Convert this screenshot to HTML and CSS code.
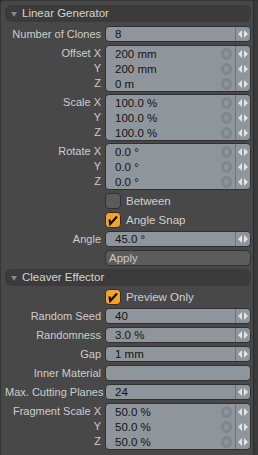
FILE: index.html
```html
<!DOCTYPE html>
<html lang="en">
<head>
  <meta charset="UTF-8">
  <title>Cleaver Properties</title>
  <link rel="stylesheet" href="styles.css">
</head>
<body>
  <div class="panel">
    <div class="form">
      <!-- Linear Generator -->
      <div class="section-head first"><span class="caret"></span>Linear Generator</div>

      <div class="row">
        <div class="label">Number of Clones</div>
        <div class="field"><span class="value">8</span><span class="spin"></span></div>
      </div>

      <div class="group">
        <div class="labels"><div>Offset X</div><div>Y</div><div>Z</div></div>
        <div class="box">
          <div class="line"><span class="value">200 mm</span><span class="ring"></span><span class="spin"></span></div>
          <div class="line"><span class="value">200 mm</span><span class="ring"></span><span class="spin"></span></div>
          <div class="line"><span class="value">0 m</span><span class="ring"></span><span class="spin"></span></div>
        </div>
      </div>

      <div class="group">
        <div class="labels"><div>Scale X</div><div>Y</div><div>Z</div></div>
        <div class="box">
          <div class="line"><span class="value">100.0 %</span><span class="ring"></span><span class="spin"></span></div>
          <div class="line"><span class="value">100.0 %</span><span class="ring"></span><span class="spin"></span></div>
          <div class="line"><span class="value">100.0 %</span><span class="ring"></span><span class="spin"></span></div>
        </div>
      </div>

      <div class="group">
        <div class="labels"><div>Rotate X</div><div>Y</div><div>Z</div></div>
        <div class="box">
          <div class="line"><span class="value">0.0 °</span><span class="ring"></span><span class="spin"></span></div>
          <div class="line"><span class="value">0.0 °</span><span class="ring"></span><span class="spin"></span></div>
          <div class="line"><span class="value">0.0 °</span><span class="ring"></span><span class="spin"></span></div>
        </div>
      </div>

      <div class="row">
        <div class="label"></div>
        <label class="check"><span class="box-check"></span>Between</label>
      </div>

      <div class="row">
        <div class="label"></div>
        <label class="check">
          <span class="box-check on"><svg viewBox="0 0 14 14" width="14" height="14"><path d="M3.5 6.5 L4.2 11 L11 3.5" fill="none" stroke="#111" stroke-width="2.2"/></svg></span>Angle Snap
        </label>
      </div>

      <div class="row">
        <div class="label">Angle</div>
        <div class="field"><span class="value">45.0 °</span><span class="spin"></span></div>
      </div>

      <div class="row">
        <div class="label"></div>
        <div class="button">Apply</div>
      </div>

      <!-- Cleaver Effector -->
      <div class="section-head"><span class="caret"></span>Cleaver Effector</div>

      <div class="row">
        <div class="label"></div>
        <label class="check">
          <span class="box-check on"><svg viewBox="0 0 14 14" width="14" height="14"><path d="M3.5 6.5 L4.2 11 L11 3.5" fill="none" stroke="#111" stroke-width="2.2"/></svg></span>Preview Only
        </label>
      </div>

      <div class="row">
        <div class="label">Random Seed</div>
        <div class="field"><span class="value">40</span><span class="spin"></span></div>
      </div>

      <div class="row">
        <div class="label">Randomness</div>
        <div class="field"><span class="value">3.0 %</span><span class="spin"></span></div>
      </div>

      <div class="row">
        <div class="label">Gap</div>
        <div class="field"><span class="value">1 mm</span><span class="spin"></span></div>
      </div>

      <div class="row">
        <div class="label">Inner Material</div>
        <div class="field"></div>
      </div>

      <div class="row">
        <div class="label">Max. Cutting Planes</div>
        <div class="field"><span class="value">24</span><span class="spin"></span></div>
      </div>

      <div class="group">
        <div class="labels"><div>Fragment Scale X</div><div>Y</div><div>Z</div></div>
        <div class="box">
          <div class="line"><span class="value">50.0 %</span><span class="ring"></span><span class="spin"></span></div>
          <div class="line"><span class="value">50.0 %</span><span class="ring"></span><span class="spin"></span></div>
          <div class="line"><span class="value">50.0 %</span><span class="ring"></span><span class="spin"></span></div>
        </div>
      </div>
    </div>
    <div class="edge"></div>
  </div>
</body>
</html>
```

FILE: styles.css
```css
/* Page */
body {
  margin: 0;
  background: #2a2a2a;
  font-family: "Liberation Sans", sans-serif;
  font-size: 11px;
}

.panel {
  width: 258px;
  height: 455px;
  display: flex;
  background: #484848;
  border-top-left-radius: 4px;
  box-sizing: border-box;
  border-top: 1px solid #353535;
  border-left: 1px solid #353535;
  overflow: hidden;
}

.form {
  flex: 1;
  display: flex;
  flex-direction: column;
  gap: 3px;
  padding: 4px 2px 0 4px;
}

.edge {
  width: 4px;
  background: #3a3a3a;
  border-left: 1px solid #2c2c2c;
}

/* Section headers */
.section-head {
  height: 17px;
  background: #3b3b3b;
  border-radius: 6px;
  color: #d4d4d4;
  font-size: 11.5px;
  line-height: 17px;
  display: flex;
  align-items: center;
}

.section-head.first {
  margin-bottom: 1px;
}

.caret {
  width: 0;
  height: 0;
  margin: 1px 5px 0 6px;
  border-left: 3px solid transparent;
  border-right: 3px solid transparent;
  border-top: 5px solid #8a8a8a;
}

/* Rows */
.row {
  display: flex;
  height: 16px;
  gap: 4px;
}

.label,
.labels div {
  width: 96px;
  flex: none;
  text-align: right;
  color: #cdcdcd;
  line-height: 16px;
  white-space: nowrap;
}

.field {
  flex: 1;
  display: flex;
  align-items: center;
  background: #8e959b;
  border: 1px solid #2f3032;
  border-radius: 4px;
  box-sizing: border-box;
}

.value {
  flex: 1;
  padding-left: 9px;
  color: #141414;
  font-size: 11.5px;
  line-height: 14px;
}

.spin {
  align-self: stretch;
  width: 14px;
  border-left: 1px solid #6f757a;
  position: relative;
}

.spin::before,
.spin::after {
  content: "";
  position: absolute;
  top: 50%;
  margin-top: -4px;
  border-top: 4px solid transparent;
  border-bottom: 4px solid transparent;
}

.spin::before {
  left: 2px;
  border-right: 4px solid #e2e4e6;
}

.spin::after {
  left: 8px;
  border-left: 4px solid #e2e4e6;
}

/* Keyframe ring shown on vector channels */
.ring {
  width: 5px;
  height: 6px;
  margin-right: 3px;
  border: 3px solid #80868b;
  border-radius: 50%;
}

/* Grouped vector fields */
.group {
  display: flex;
  gap: 4px;
  height: 47px;
}

.group + .group {
  margin-top: -1px;
}

.labels {
  display: flex;
  flex-direction: column;
  padding-top: 1px;
}

.labels div {
  height: 15px;
  line-height: 15px;
}

.box {
  flex: 1;
  display: flex;
  flex-direction: column;
  background: #8e959b;
  border: 1px solid #2f3032;
  border-radius: 4px;
  box-sizing: border-box;
}

.line {
  height: 15px;
  display: flex;
  align-items: center;
}

/* Checkboxes */
.check {
  display: flex;
  align-items: center;
  gap: 5px;
  color: #d0d0d0;
  font-size: 11.5px;
}

.box-check {
  width: 16px;
  height: 16px;
  box-sizing: border-box;
  border: 1px solid #2f2f2f;
  border-radius: 4px;
  background: #5b5b5b;
  display: flex;
}

.box-check.on {
  background: #f2a52a;
}

/* Button */
.button {
  flex: 1;
  background: #5c5c5c;
  border: 1px solid #333;
  border-radius: 5px;
  box-sizing: border-box;
  color: #c8c8c8;
  font-size: 11.5px;
  line-height: 14px;
  padding-left: 3px;
}
```
